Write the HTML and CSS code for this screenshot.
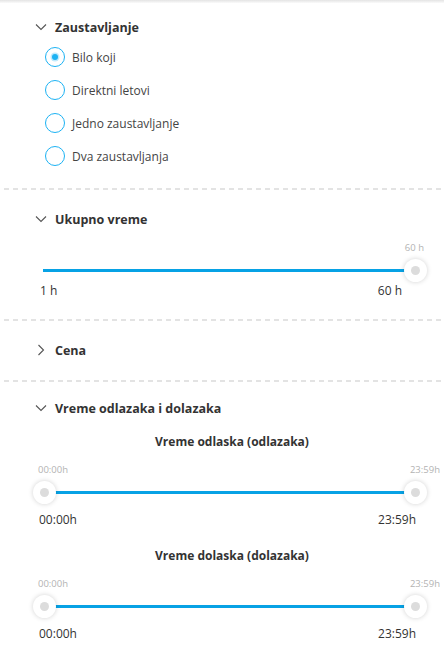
FILE: index.html
```html
<!DOCTYPE html>
<html lang="sr">
<head>
  <meta charset="UTF-8">
  <meta name="viewport" content="width=device-width, initial-scale=1.0">
  <title>Filteri</title>
  <link rel="stylesheet" href="styles.css">
</head>
<body>
  <div class="top-shadow"></div>

  <section class="filter filter-stops">
    <h3 class="filter-title">
      <svg class="chevron" width="12" height="12" viewBox="0 0 12 12"><polyline points="1,3.5 6,8.5 11,3.5" /></svg>
      Zaustavljanje
    </h3>
    <div class="radio-list">
      <label class="radio-row"><span class="radio checked"></span>Bilo koji</label>
      <label class="radio-row"><span class="radio"></span>Direktni letovi</label>
      <label class="radio-row"><span class="radio"></span>Jedno zaustavljanje</label>
      <label class="radio-row"><span class="radio"></span>Dva zaustavljanja</label>
    </div>
  </section>

  <div class="divider"></div>

  <section class="filter filter-duration">
    <h3 class="filter-title">
      <svg class="chevron" width="12" height="12" viewBox="0 0 12 12"><polyline points="1,3.5 6,8.5 11,3.5" /></svg>
      Ukupno vreme
    </h3>
    <div class="slider slider-single">
      <div class="slider-top"><span></span><span>60 h</span></div>
      <div class="track-wrap">
        <div class="track"></div>
        <span class="thumb thumb-right"></span>
      </div>
      <div class="slider-bottom"><span>1 h</span><span>60 h</span></div>
    </div>
  </section>

  <div class="divider"></div>

  <section class="filter filter-price">
    <h3 class="filter-title">
      <svg class="chevron" width="12" height="12" viewBox="0 0 12 12"><polyline points="3.5,1 8.5,6 3.5,11" /></svg>
      Cena
    </h3>
  </section>

  <div class="divider"></div>

  <section class="filter filter-times">
    <h3 class="filter-title">
      <svg class="chevron" width="12" height="12" viewBox="0 0 12 12"><polyline points="1,3.5 6,8.5 11,3.5" /></svg>
      Vreme odlazaka i dolazaka
    </h3>

    <h4 class="slider-title">Vreme odlaska (odlazaka)</h4>
    <div class="slider slider-range">
      <div class="slider-top"><span>00:00h</span><span>23:59h</span></div>
      <div class="track-wrap">
        <div class="track"></div>
        <span class="thumb thumb-left"></span>
        <span class="thumb thumb-right"></span>
      </div>
      <div class="slider-bottom"><span>00:00h</span><span>23:59h</span></div>
    </div>

    <h4 class="slider-title">Vreme dolaska (dolazaka)</h4>
    <div class="slider slider-range">
      <div class="slider-top"><span>00:00h</span><span>23:59h</span></div>
      <div class="track-wrap">
        <div class="track"></div>
        <span class="thumb thumb-left"></span>
        <span class="thumb thumb-right"></span>
      </div>
      <div class="slider-bottom"><span>00:00h</span><span>23:59h</span></div>
    </div>
  </section>
</body>
</html>
```

FILE: styles.css
```css
* {
  margin: 0;
  padding: 0;
  box-sizing: border-box;
}

body {
  font-family: 'Open Sans', 'Noto Sans', sans-serif;
  background-color: #fff;
  color: #444;
  font-size: 12px;
  overflow: hidden;
}

.top-shadow {
  height: 3px;
  background: linear-gradient(to bottom, #e4e4e4, #fafafa);
}

.filter {
  padding: 19px 0 20px;
}

.filter-stops {
  padding-top: 14px;
  padding-bottom: 22px;
}

.filter-duration {
  padding-bottom: 19px;
}

.filter-times {
  padding-top: 16px;
}

.filter-title {
  display: flex;
  align-items: center;
  height: 20px;
  padding-left: 35px;
  font-size: 12.5px;
  font-weight: 700;
  color: #333;
}

.chevron {
  margin-right: 8px;
  fill: none;
  stroke: #555;
  stroke-width: 1.1;
}

.radio-list {
  display: flex;
  flex-direction: column;
  gap: 13px;
  margin-top: 10px;
  padding-left: 45px;
}

.radio-row {
  display: flex;
  align-items: center;
  gap: 7px;
  height: 20px;
  font-size: 12px;
  color: #444;
}

.radio {
  width: 20px;
  height: 20px;
  border: 1.5px solid #1cb2f3;
  border-radius: 50%;
  display: flex;
  align-items: center;
  justify-content: center;
}

.radio.checked::after {
  content: '';
  width: 6px;
  height: 6px;
  border-radius: 50%;
  background-color: #1cb2f3;
  box-shadow: 0 0 0 1.5px #bfe9fc;
}

.divider {
  height: 2px;
  margin-left: 4px;
  background-image: repeating-linear-gradient(to right, #e3e3e3 0 5px, transparent 5px 9px);
}

/* sliders */
.slider {
  padding: 0 0 0 33px;
  width: 440px;
}

.slider-top,
.slider-bottom {
  display: flex;
  justify-content: space-between;
}

.slider-top {
  height: 14px;
  line-height: 14px;
  font-size: 9.5px;
  color: #b3b3b3;
}

.slider-bottom {
  font-size: 12px;
  color: #333;
  height: 18px;
  line-height: 18px;
}

.track-wrap {
  position: relative;
  height: 24px;
  margin: 4px 0 0;
  width: 394px;
}

.track {
  position: absolute;
  left: 10px;
  right: 11px;
  top: 10px;
  height: 3px;
  background-color: #07a2e5;
}

.thumb {
  position: absolute;
  top: 0;
  width: 23px;
  height: 23px;
  border-radius: 50%;
  background-color: #fff;
  box-shadow: 0 0 5px rgba(0, 0, 0, 0.18);
  display: flex;
  align-items: center;
  justify-content: center;
}

.thumb::after {
  content: '';
  width: 9px;
  height: 9px;
  border-radius: 50%;
  background-color: #dcdcdc;
}

.thumb-left {
  left: 0;
}

.thumb-right {
  right: 0;
}

.slider-single {
  margin-top: 12px;
}

.slider-single .slider-top {
  padding-right: 16px;
}

.slider-single .slider-bottom {
  margin-top: -1px;
  padding: 0 38px 0 7px;
}

.slider-range .slider-top {
  padding-left: 5px;
}

.slider-range .slider-bottom {
  margin-top: 6px;
  padding: 0 24px 0 6px;
}

.slider-title {
  text-align: center;
  width: 464px;
  font-size: 12px;
  font-weight: 700;
  color: #333;
  margin: 15px 0 13px;
}

.slider-range + .slider-title {
  margin-top: 18px;
}
```
